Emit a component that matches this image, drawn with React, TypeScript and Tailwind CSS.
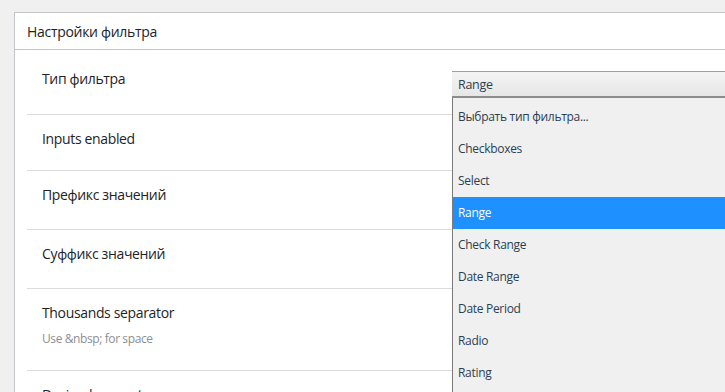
import React from 'react';

const options = [
  'Выбрать тип фильтра...',
  'Checkboxes',
  'Select',
  'Range',
  'Check Range',
  'Date Range',
  'Date Period',
  'Radio',
  'Rating',
  'Color',
];

const rows = [
  { label: 'Inputs enabled', h: 'h-[56px]' },
  { label: 'Префикс значений', h: 'h-[59px]' },
  { label: 'Суффикс значений', h: 'h-[59px]' },
  { label: 'Thousands separator', h: 'h-[82px]', desc: 'Use &nbsp; for space' },
  { label: 'Decimal separator', h: 'h-[60px]' },
];

export default function App() {
  const selected = 'Range';

  return (
    <div
      className="w-[725px] h-[392px] overflow-hidden bg-[#f0f0f1] pl-[14px] pt-[12px]"
      style={{ fontFamily: '"Segoe UI", "Open Sans", "Noto Sans", sans-serif' }}
    >
      <div className="w-[760px] bg-white border-l border-t border-[#c3c4c7] h-[400px]">
        <div className="h-[37px] border-b border-[#c3c4c7] pl-[12px] flex items-center text-[14px] tracking-[-0.3px] text-[#1d2327]">
          Настройки фильтра
        </div>

        <div className="ml-[12px] pt-[5px]">
          {/* filter type row */}
          <div className="h-[60px] border-b border-[#dcdcde] flex items-start">
            <div className="w-[425px] pl-[15px] pt-[14px] text-[14px] leading-[20px] tracking-[-0.35px] text-[#1d2327]">
              Тип фильтра
            </div>
            <div className="relative mt-[16px] w-[300px]">
              <div className="h-[27px] border-t border-[#a0a0a0] border-b-2 border-b-[#8c8c8c] bg-gradient-to-b from-[#f4f4f4] to-[#e6e6e6] pl-[6px] pt-[3px] flex items-center text-[12.5px] tracking-[-0.3px] text-[#2c3e50]">
                {selected}
              </div>
              <div className="absolute left-0 top-full w-[300px] bg-[#f0f0f0] border-l border-[#7a7a7a] pt-[3px] z-10">
                {options.map((o) => (
                  <div
                    key={o}
                    className={
                      o === selected
                        ? 'h-[32px] pl-[5px] flex items-center text-[12px] tracking-[-0.3px] bg-[#1e90ff] text-white'
                        : 'h-[32px] pl-[5px] flex items-center text-[12px] tracking-[-0.3px] text-[#2c3e50]'
                    }
                  >
                    {o}
                  </div>
                ))}
              </div>
            </div>
          </div>

          {rows.map((r) => (
            <div key={r.label} className={`${r.h} border-b border-[#dcdcde] pl-[15px] pt-[14px]`}>
              <div className="text-[14px] leading-[20px] tracking-[-0.35px] text-[#1d2327]">{r.label}</div>
              {r.desc && (
                <div className="mt-[8px] text-[12px] leading-[16px] tracking-[-0.4px] text-[#8c8f94]">{r.desc}</div>
              )}
            </div>
          ))}
        </div>
      </div>
    </div>
  );
}
